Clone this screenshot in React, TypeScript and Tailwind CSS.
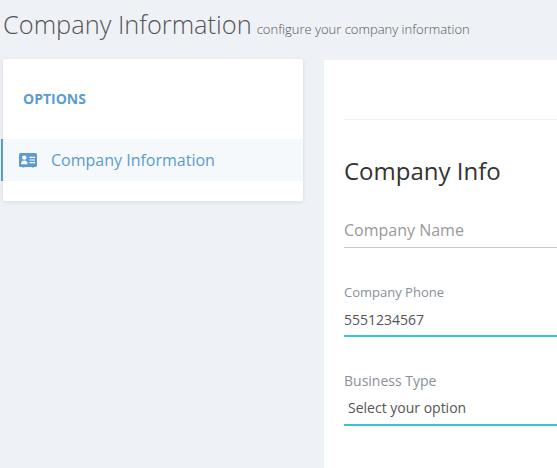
function CardIcon() {
  return (
    <svg viewBox="0 0 18 15" className="w-[18px] h-[15px] shrink-0" fill="none">
      <rect x="0" y="0" width="18" height="14" rx="1.5" fill="#5c9bd1" />
      <rect x="3.5" y="13.5" width="2" height="1" fill="#5c9bd1" />
      <rect x="13" y="13.5" width="2" height="1" fill="#5c9bd1" />
      <circle cx="5.3" cy="4.6" r="2.2" fill="#fff" />
      <path d="M2 11.2c0-2.4 1.3-3.8 3.3-3.8s3.3 1.4 3.3 3.8z" fill="#fff" />
      <path d="M10.5 4.3h5.5M10.5 7h5.5M10.5 9.7h5.5" stroke="#fff" strokeWidth="1.2" />
    </svg>
  );
}

function Sidebar() {
  return (
    <aside className="w-[300px] h-[142px] shrink-0 bg-white rounded-[2px] shadow-[0_1px_4px_rgba(120,130,150,0.2)]">
      <h3 className="pl-[20px] pt-[31px] h-[80px] text-[14px] leading-[18px] font-bold text-[#5c9bd1]">
        OPTIONS
      </h3>
      <a className="relative -ml-[2px] flex h-[42px] items-center border-l-2 border-[#5c9bd1] bg-[#f6f9fc] pl-[16px] text-[#5b9bd1]">
        <CardIcon />
        <span className="ml-[14px] text-[16px] leading-[22px]">Company Information</span>
      </a>
    </aside>
  );
}

function Field({ label, value, business }: { label: string; value: string; business?: boolean }) {
  return (
    <div>
      <label className={`block leading-[18px] text-[#888f99] ${business ? "text-[14px]" : "text-[13px]"}`}>
        {label}
      </label>
      <div
        className={`border-b-2 border-[#36c6d3] text-[14px] leading-[20px] text-[#555] ${
          business ? "mt-[8px] h-[28px] pl-[4px]" : "mt-[9px] h-[27px]"
        }`}
      >
        {value}
      </div>
    </div>
  );
}

export default function App() {
  return (
    <div className="h-[468px] w-[557px] overflow-hidden bg-[#eef1f6] font-['Open_Sans',sans-serif]">
      <h1 className="h-[59px] pl-[3px] pt-[6px] whitespace-nowrap text-[#555] text-[25.4px] leading-[36px] font-light">
        Company Information
        <small className="ml-[5px] text-[13px] font-light text-[#555]">configure your company information</small>
      </h1>
      <div className="flex pl-[3px] gap-[21px]">
        <Sidebar />
        <main className="mt-px h-[420px] flex-1 bg-white pl-[20px]">
          <div className="h-[60px] border-b border-[#eef1f5]" />
          <h2 className="mt-[34px] text-[24px] leading-[33px] text-[#333]">Company Info</h2>
          <div className="mt-[25px] h-[36px] border-b border-[#c2cad8] text-[16px] leading-[26px] pt-[5px] text-[#999]">
            Company Name
          </div>
          <div className="mt-[35px]">
            <Field label="Company Phone" value="5551234567" />
          </div>
          <div className="mt-[35px]">
            <Field label="Business Type" value="Select your option" business />
          </div>
        </main>
      </div>
    </div>
  );
}
